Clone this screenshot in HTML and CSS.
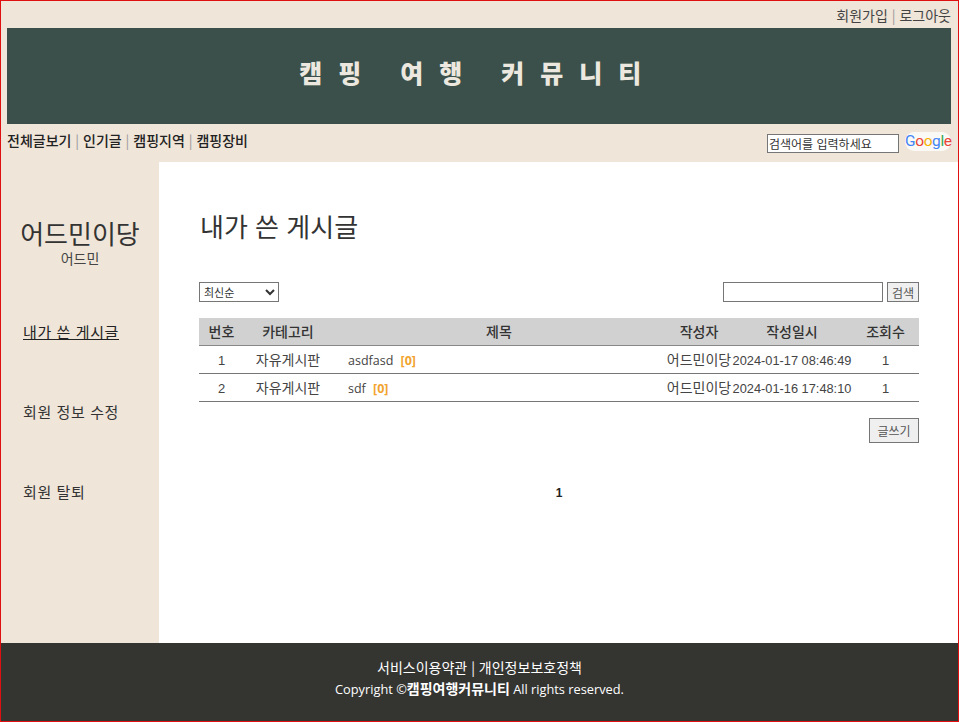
FILE: index.html
```html
<!DOCTYPE html>
<html lang="ko">
<head>
    <meta charset="UTF-8">
    <meta name="viewport" content="width=device-width, initial-scale=1.0">
    <title>캠핑 여행 커뮤니티</title>
    <link rel="stylesheet" href="styles.css">
</head>
<body>
    <div class="page">
        <div class="top-links">
            <a href="#">회원가입</a> <span class="sep">|</span> <a href="#">로그아웃</a>
        </div>
        <header class="banner">
            <h1>캠 핑&nbsp;&nbsp; 여 행&nbsp;&nbsp; 커 뮤 니 티</h1>
        </header>
        <nav class="main-nav">
            <div class="nav-links">
                <a href="#">전체글보기</a> <span class="sep">|</span>
                <a href="#">인기글</a> <span class="sep">|</span>
                <a href="#">캠핑지역</a> <span class="sep">|</span>
                <a href="#">캠핑장비</a>
            </div>
            <form class="google-search">
                <input type="text" class="google-input" placeholder="검색어를 입력하세요">
                <span class="google-logo"><span class="g-blue">G</span><span class="g-red">o</span><span class="g-yellow">o</span><span class="g-blue">g</span><span class="g-green">l</span><span class="g-red">e</span></span>
            </form>
        </nav>
        <div class="content">
            <aside class="sidebar">
                <div class="nickname">어드민이당</div>
                <div class="role">어드민</div>
                <ul class="side-menu">
                    <li><a href="#" class="active">내가 쓴 게시글</a></li>
                    <li><a href="#">회원 정보 수정</a></li>
                    <li><a href="#">회원 탈퇴</a></li>
                </ul>
            </aside>
            <main class="board">
                <h2>내가 쓴 게시글</h2>
                <div class="board-tools">
                    <select class="sort-select">
                        <option>최신순</option>
                    </select>
                    <form class="board-search">
                        <input type="text" class="search-input">
                        <button type="button" class="search-btn">검색</button>
                    </form>
                </div>
                <table class="post-table">
                    <colgroup>
                        <col class="col-no">
                        <col class="col-cat">
                        <col>
                        <col class="col-writer">
                        <col class="col-date">
                        <col class="col-views">
                    </colgroup>
                    <thead>
                        <tr>
                            <th>번호</th>
                            <th>카테고리</th>
                            <th>제목</th>
                            <th>작성자</th>
                            <th>작성일시</th>
                            <th>조회수</th>
                        </tr>
                    </thead>
                    <tbody>
                        <tr>
                            <td class="num-cell">1</td>
                            <td>자유게시판</td>
                            <td class="title-cell">asdfasd <span class="reply-count">[0]</span></td>
                            <td>어드민이당</td>
                            <td class="date-cell">2024-01-17 08:46:49</td>
                            <td class="num-cell">1</td>
                        </tr>
                        <tr>
                            <td class="num-cell">2</td>
                            <td>자유게시판</td>
                            <td class="title-cell">sdf <span class="reply-count">[0]</span></td>
                            <td>어드민이당</td>
                            <td class="date-cell">2024-01-16 17:48:10</td>
                            <td class="num-cell">1</td>
                        </tr>
                    </tbody>
                </table>
                <div class="write-row">
                    <button type="button" class="write-btn">글쓰기</button>
                </div>
                <div class="pager">1</div>
            </main>
        </div>
        <footer class="site-footer">
            <p class="footer-links">서비스이용약관 | 개인정보보호정책</p>
            <p class="footer-copy">Copyright ©<strong>캠핑여행커뮤니티</strong> All rights reserved.</p>
        </footer>
    </div>
</body>
</html>
```
FILE: styles.css
```css
* {
    box-sizing: border-box;
}
html, body {
    margin: 0;
    padding: 0;
}
body {
    font-family: "Noto Sans CJK KR", "Noto Sans", sans-serif;
    color: #333;
}
a {
    color: inherit;
    text-decoration: none;
}
.page {
    width: 959px;
    height: 722px;
    border: 1px solid #e01010;
    background-color: #efe5d9;
    display: flex;
    flex-direction: column;
}
.sep {
    color: #999;
}
.top-links {
    height: 27px;
    padding: 5px 7px 0 0;
    text-align: right;
    font-size: 14px;
    line-height: 18px;
    color: #444;
}
.banner {
    height: 96px;
    margin: 0 7px 0 6px;
    padding: 0 13px 9px 0;
    background-color: #3b504b;
    display: flex;
    align-items: center;
    justify-content: center;
}
.banner h1 {
    margin: 0;
    font-size: 25px;
    font-weight: 900;
    letter-spacing: 4.5px;
    color: #ece8df;
}
.main-nav {
    height: 38px;
    padding: 0 7px 0 6px;
    display: flex;
    justify-content: space-between;
    font-size: 14px;
    font-weight: 500;
    color: #222;
}
.nav-links {
    padding-top: 6px;
    line-height: 20px;
}
.nav-links .sep {
    font-weight: 400;
}
.google-search {
    display: flex;
    align-items: flex-start;
    padding-top: 10px;
}
.google-input {
    width: 132px;
    height: 19px;
    padding: 0 1px;
    border: 1px solid #767676;
    border-radius: 0;
    font-family: inherit;
    font-size: 12px;
    background-color: #fff;
}
.google-input::placeholder {
    color: #333;
}
.google-logo {
    margin: -2px 0 0 6px;
    width: 46px;
    height: 19px;
    font-family: "Roboto", sans-serif;
    font-size: 15.5px;
    font-weight: 400;
    letter-spacing: -0.4px;
    line-height: 18px;
    text-align: center;
    background-color: #fbf9f6;
    border-radius: 9px;
}
.g-blue { color: #4285f4; }
.g-red { color: #ea4335; }
.g-yellow { color: #f4b400; }
.g-green { color: #34a853; }
.content {
    flex: 1;
    display: flex;
    min-height: 0;
}
.sidebar {
    flex: 0 0 158px;
    padding-top: 54px;
    text-align: center;
}
.nickname {
    font-size: 26px;
    line-height: 34px;
}
.role {
    font-size: 14px;
    line-height: 16px;
    color: #444;
}
.side-menu {
    list-style: none;
    margin: 54px 0 0;
    padding: 0 0 0 22px;
    text-align: left;
    font-size: 15px;
    letter-spacing: 0.6px;
}
.side-menu li {
    height: 80px;
    line-height: 24px;
}
.side-menu .active {
    text-decoration: underline;
    color: #222;
}
.board {
    flex: 1;
    background-color: #fff;
    padding: 44px 39px 0 40px;
}
.board h2 {
    margin: 0 0 36px 1px;
    font-size: 26px;
    line-height: 40px;
    font-weight: 400;
}
.board-tools {
    display: flex;
    justify-content: space-between;
    align-items: center;
    height: 20px;
}
.sort-select {
    width: 80px;
    height: 20px;
    border: 1px solid #767676;
    border-radius: 0;
    background-color: #fff;
    font-family: inherit;
    font-size: 11px;
    color: #333;
}
.board-search {
    display: flex;
    gap: 4px;
}
.search-input {
    width: 160px;
    height: 20px;
    border: 1px solid #767676;
    border-radius: 0;
    padding: 0 2px;
}
.search-btn {
    width: 32px;
    height: 20px;
    padding: 0;
    border: 1px solid #767676;
    border-radius: 0;
    background-color: #efefef;
    font-family: inherit;
    font-size: 12px;
    color: #555;
}
.post-table {
    width: 720px;
    margin-top: 16px;
    border-collapse: collapse;
    table-layout: fixed;
    font-size: 14px;
}
.col-no { width: 45px; }
.col-cat { width: 88px; }
.col-writer { width: 66px; }
.col-date { width: 120px; }
.col-views { width: 67px; }
.post-table th {
    height: 27px;
    padding: 0;
    background-color: #d1d1d1;
    border-bottom: 1px solid #888;
    font-size: 14px;
    font-weight: 500;
}
.post-table td {
    height: 28px;
    padding: 0;
    text-align: center;
    white-space: nowrap;
    border-bottom: 1px solid #777;
    color: #444;
}
.post-table .num-cell {
    font-size: 13px;
    font-family: "Liberation Sans", sans-serif;
    padding-top: 3px;
}
.post-table .date-cell {
    font-size: 12.8px;
    font-family: "Liberation Sans", sans-serif;
    padding-top: 2px;
}
.post-table .title-cell {
    text-align: left;
    padding: 2px 0 0 16px;
    font-family: "Open Sans", sans-serif;
    font-size: 12.5px;
}
.reply-count {
    margin-left: 4px;
    color: #f2a42e;
    font-weight: 700;
}
.write-row {
    display: flex;
    justify-content: flex-end;
    margin-top: 16px;
}
.write-btn {
    width: 50px;
    height: 25px;
    padding: 0;
    border: 1px solid #767676;
    border-radius: 0;
    background-color: #efefef;
    font-family: inherit;
    font-size: 12px;
    color: #555;
}
.pager {
    margin-top: 42px;
    text-align: center;
    font-family: "Liberation Sans", sans-serif;
    font-size: 12px;
    font-weight: 700;
    line-height: 16px;
    color: #222;
}
.site-footer {
    height: 78px;
    padding-top: 13px;
    background-color: #343431;
    color: #fff;
    text-align: center;
    font-family: "Open Sans", "Noto Sans CJK KR", sans-serif;
    font-size: 12.8px;
    line-height: 22px;
}
.site-footer p {
    margin: 0;
}
.site-footer .footer-links {
    font-family: "Noto Sans CJK KR", sans-serif;
    font-size: 14px;
}
.site-footer .footer-copy {
    margin-top: -1px;
}
.site-footer strong {
    font-family: "Noto Sans CJK KR", sans-serif;
    font-size: 14px;
}
```
